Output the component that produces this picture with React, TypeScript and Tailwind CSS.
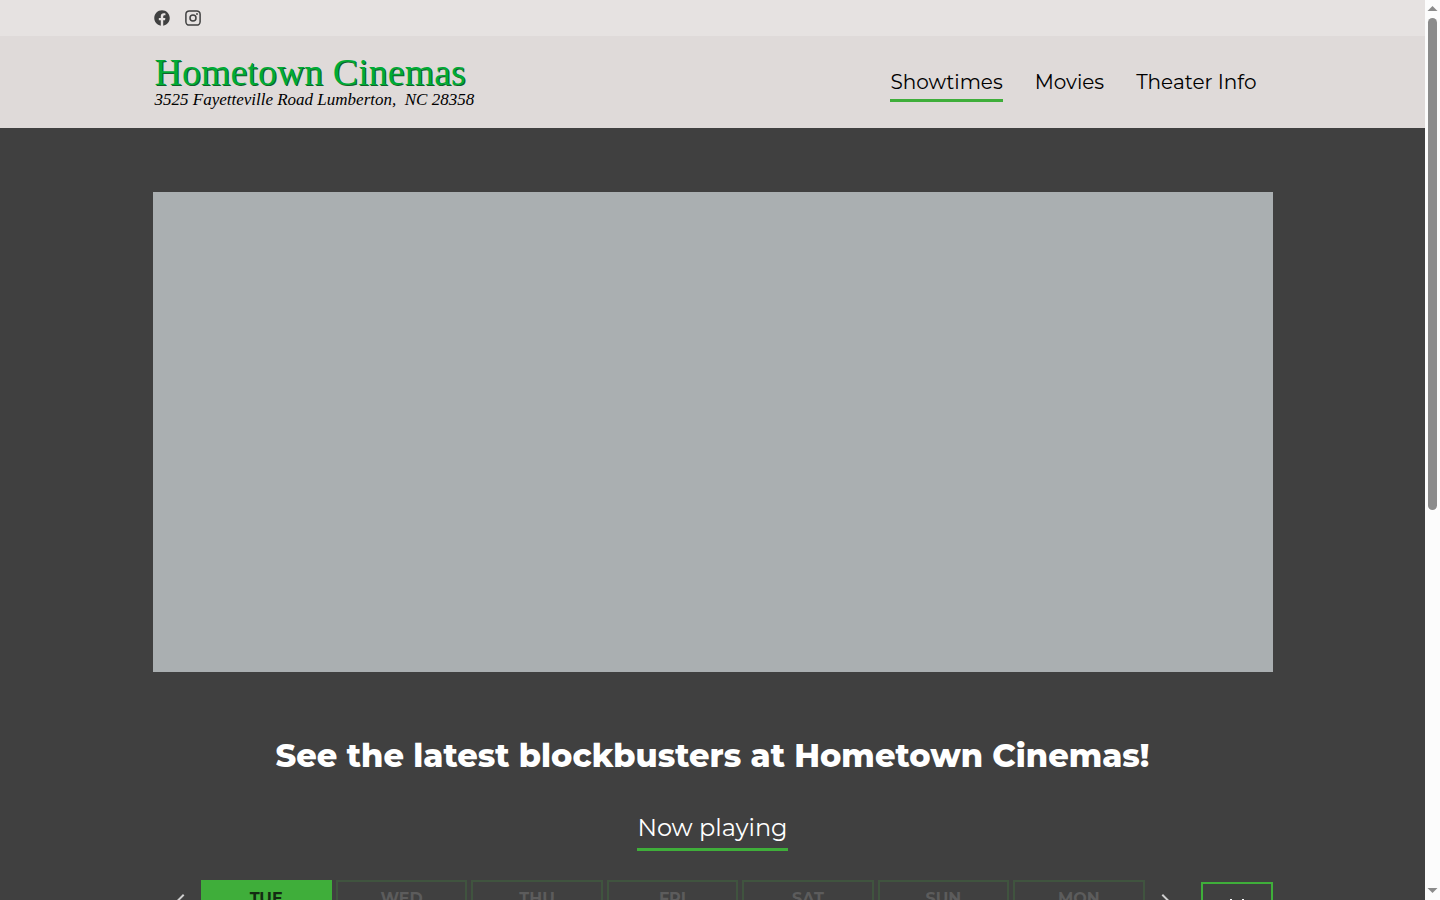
import { useState } from "react";
import { FaFacebook } from "react-icons/fa";
import { MdCalendarToday, MdChevronLeft, MdChevronRight } from "react-icons/md";
import clsx from "clsx";

const navLinks = [
  { label: "Showtimes", href: "#showtimes", active: true },
  { label: "Movies", href: "#movies", active: false },
  { label: "Theater Info", href: "#theater-info", active: false },
];

const days = ["TUE", "WED", "THU", "FRI", "SAT", "SUN", "MON"];

function InstagramIcon() {
  return (
    <svg viewBox="0 0 16 16" className="size-4" fill="none" stroke="currentColor" strokeWidth="1.5">
      <rect x="0.9" y="0.9" width="14.2" height="14.2" rx="3.4" />
      <circle cx="8" cy="8" r="3" />
      <circle cx="12" cy="4" r="0.9" fill="currentColor" stroke="none" />
    </svg>
  );
}

function TopBar() {
  return (
    <div className="bg-[#e6e2e1]">
      <div className="mx-auto flex h-9 max-w-[1120px] items-center gap-[15px] pl-px text-[#404040]">
        <a href="#facebook" aria-label="Facebook">
          <FaFacebook className="size-4" />
        </a>
        <a href="#instagram" aria-label="Instagram">
          <InstagramIcon />
        </a>
      </div>
    </div>
  );
}

function Logo() {
  return (
    <a
      href="#home"
      className="block pb-0.5 pl-0.5 whitespace-nowrap font-['Liberation_Serif',serif]"
    >
      <span className="block text-[38px] leading-[38px] text-[#00ab35] [text-shadow:1px_1px_0_#12602b]">
        Hometown Cinemas
      </span>
      <span className="block whitespace-pre text-[17px] leading-[18px] text-black italic">
        3525 Fayetteville Road Lumberton,  NC 28358
      </span>
    </a>
  );
}

function Header() {
  return (
    <header className="bg-[#dfdad9]">
      <div className="mx-auto flex h-[92px] max-w-[1120px] items-center justify-between pr-4">
        <Logo />
        <nav className="flex gap-8 pt-1 text-xl leading-[30px] text-black">
          {navLinks.map((link) => (
            <a
              key={link.label}
              href={link.href}
              className={clsx("border-b-3 pb-0.5", link.active ? "border-[#3fae3a]" : "border-transparent")}
            >
              {link.label}
            </a>
          ))}
        </nav>
      </div>
    </header>
  );
}

function DayPicker() {
  const [selected, setSelected] = useState("TUE");

  return (
    <div className="mt-[29px] flex items-start pl-2 text-white">
      <button type="button" aria-label="Previous days" className="mt-2 shrink-0 px-2 text-[#d0d0d0]">
        <MdChevronLeft className="size-6" />
      </button>
      <div className="grid flex-1 grid-cols-7 gap-1">
        {days.map((day) => (
          <button
            key={day}
            type="button"
            onClick={() => setSelected(day)}
            className={clsx(
              "h-16 border-2 pt-[7px] text-base leading-5 font-bold",
              day === selected
                ? "border-[#3fae3a] bg-[#3fae3a] text-[#132b12]"
                : "border-[#40543f] text-[#5c5c5c]"
            )}
          >
            <span className="block h-full">{day}</span>
          </button>
        ))}
      </div>
      <button type="button" aria-label="Next days" className="mt-2 shrink-0 px-2 text-[#d0d0d0]">
        <MdChevronRight className="size-6" />
      </button>
      <button
        type="button"
        aria-label="Open calendar"
        className="mt-0.5 ml-4 flex h-14 w-[72px] shrink-0 items-center justify-center border-2 border-[#3fae3a]"
      >
        <MdCalendarToday className="size-6" />
      </button>
    </div>
  );
}

function ScrollTrack() {
  return (
    <div aria-hidden="true" className="flex w-[15px] shrink-0 flex-col items-center bg-[#fcfcfc] text-[#8b8b8b]">
      <svg viewBox="0 0 15 18" className="h-[18px] w-[15px] shrink-0" fill="currentColor">
        <path d="M7.5 6 12.5 11h-10z" />
      </svg>
      <div className="h-[492px] w-[9px] rounded-full bg-[#8b8b8b]" />
      <svg viewBox="0 0 15 18" className="mt-auto h-[18px] w-[15px] shrink-0" fill="currentColor">
        <path d="M7.5 11 2.5 6h10z" />
      </svg>
    </div>
  );
}

export default function App() {
  return (
    <div className="flex h-screen bg-[#404040] font-['Montserrat','Inter',sans-serif]">
      <div className="flex-1 overflow-y-auto [scrollbar-width:none]">
        <TopBar />
        <Header />
        <main className="mx-auto max-w-[1120px] py-16">
          <div className="h-[480px] bg-[#aaafb1]" />
          <h1 className="mt-16 text-center text-[32px] leading-10 font-extrabold text-white">
            See the latest blockbusters at Hometown Cinemas!
          </h1>
          <div className="mt-8 text-center">
            <h2 className="inline-block border-b-3 border-[#3fae3a] text-2xl leading-10 text-white">
              Now playing
            </h2>
          </div>
          <DayPicker />
        </main>
      </div>
      <ScrollTrack />
    </div>
  );
}
